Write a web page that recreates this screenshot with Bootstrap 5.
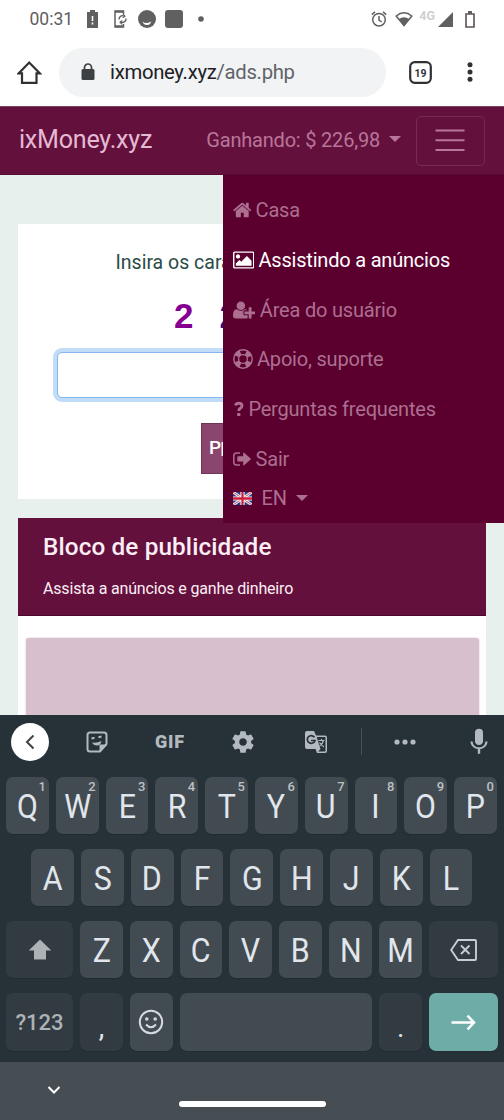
<!DOCTYPE html>
<html lang="pt">
<head>
<meta charset="utf-8">
<meta name="viewport" content="width=device-width, initial-scale=1">
<title>ixMoney.xyz</title>
<link href="https://cdn.jsdelivr.net/npm/bootstrap@5.3.0/dist/css/bootstrap.min.css" rel="stylesheet">
<style>
body{font-family:Roboto,"Liberation Sans",sans-serif;height:1120px;overflow:hidden;background:#fff;line-height:1.2}
svg{display:block;flex:none}
.statusbar{height:40px;padding:0 29px 2px 29.5px;color:#606060;font-size:17.5px}
.addressbar{height:66px;padding-left:17px;padding-bottom:2px}
.omnibox{width:327px;height:49px;background:#f1f3f4;margin-left:17px;padding-left:22px;font-size:20.3px;letter-spacing:-.3px;color:#5f6368}
.omnibox b{font-weight:400;color:#202124}
.topnav{height:69px;background:#64103d;padding:0 19px;border-top:1px solid #7c4460;border-bottom:1px solid #5a0836}
.topnav .navbar-brand{color:#e5b9d3;font-size:25.1px;padding:0;margin:0;letter-spacing:-.24px}
.earn{color:#b87699;font-size:20px;margin-left:auto;margin-right:15px;letter-spacing:-.2px;padding-bottom:2px}
.earn::after,.lang::after{margin-left:9px;vertical-align:5px;border-width:6px 6px 0}
.navbar-toggler{width:69px;height:50px;border:1px solid #772b54;border-radius:5px;padding:0 1px 2px 0}
.sitepage{height:540px;background:#e8f0ee;padding:49px 18px 0}
.captcha{height:275px;background:#fff;padding-top:27px}
.captcha p{font-size:19.5px;color:#2b4b46;margin-left:97.5px;width:107px;overflow:hidden;line-height:24px}
.digits{font:700 35px/40px "Liberation Sans",sans-serif;color:#850091;padding-left:156px;margin-top:21px;height:40px;width:205px;white-space:nowrap;overflow:hidden}
.digits span{display:inline-block;margin-left:26px;color:#2b0d8a}
.answer{width:390px;height:46px;margin:16px 0 0 38.5px;border:1px solid #86b7ee;border-radius:5px;box-shadow:0 0 0 4px #c0dcf6;padding:0}
.send{margin:25px 0 0 183px;width:101px;height:51px;background:#8a466f;border:1px solid #713459;border-radius:0;color:#fff;font-size:19px;font-weight:500;padding:0 7px;text-align:left}
.adhead{height:98px;background:#64103d;margin-top:19px;padding:15px 25px;color:#fceef5;border-bottom:1px solid #4c0630}
.adhead h2{font-size:24.3px;font-weight:500;line-height:28px;margin:0 0 17px;letter-spacing:.12px}
.adhead p{font-size:16px;line-height:22px;margin:0;letter-spacing:-.17px}
.adbody{height:110px;padding:22px 7px 0 8px;background:#fff}
.adslot{height:90px;background:#d7bfce;border-radius:3px;box-shadow:0 0 2px #cfb5c5}
.sidemenu{position:absolute;left:223px;top:175px;width:281px;height:348px;background:#5b002e;padding:11px 0 0 9.500px;font-size:20px;letter-spacing:-.2px;color:#ac6f90;z-index:2}
.sidemenu .nav-link{height:49.7px;padding:0 0 1px;color:inherit;display:flex;align-items:center;gap:4.500px;white-space:nowrap}
.sidemenu .nav-link svg{height:20px;fill:currentColor}
.sidemenu .active{color:#fff}
.lang{height:28px;display:flex;align-items:center}
.keyboard{height:347px;background:#273138;color:#e1e6ec;position:relative;z-index:3}
.toolrow{height:53px;color:#b3babf}
.toolrow>div{display:flex;justify-content:center;align-items:center}
.w73{width:73px}
.back{width:38px;height:38px;background:#fff}
.gif{font-size:18px;font-weight:900;letter-spacing:.8px}
.keys{display:flex;gap:7px;height:57px;margin:0 6.5px 15px 6px}
.keys>div{width:42.8px;background:#434b52;border-radius:7px;display:flex;align-items:center;justify-content:center;font-size:33px;position:relative;box-shadow:0 1px 0 #222b31;flex:none;padding-top:3px}
.keys span{transform:scaleX(.92);line-height:32px}
.keys sup{position:absolute;right:3px;top:2px;font-size:13px;font-weight:500;line-height:15px;color:#bac0c5}
.keys>.dim{background:#313b41;color:#acb2b6}
.keys>.wide{width:67px}
.keys>.enter{background:#6eaca7}
.keys>.pic{padding-top:0}
.sysbar{height:58px;background:#464e53;position:relative;z-index:3}
.homebar{width:147px;height:6px;border-radius:3px;background:#fff}
</style>
</head>
<body>
<div class="statusbar d-flex align-items-center">
  <span>00:31</span>
  <svg style="margin-left:12px" width="16" height="20" viewBox="0 0 16 20"><path fill="#606060" d="M5 1h5v2h3v16H2V3h3z"/><path d="M7.5 7v5M7.5 13.5v2" stroke="#fff" stroke-width="1.6"/></svg>
  <svg style="margin-left:12px" width="16" height="20" viewBox="0 0 16 20" fill="none" stroke="#606060"><path d="M10.500 5V2H2v16h8.500v-3" stroke-width="1.500"/><path d="M2 2.700h8.500M2 17.300h8.500" stroke-width="2"/><path d="M6 10.500a3.600 3.600 0 0 1 5.500-3.300M13 9.500a3.600 3.600 0 0 1-5.500 3.400" stroke-width="1.400"/><path d="m10 5 2 2.200-2.300 1.600M9 15.300l-2-2.300 2.300-1.500" stroke-width="1.100"/></svg>
  <svg style="margin-left:9px" width="18" height="18" viewBox="0 0 18 18"><circle cx="9" cy="9" r="9" fill="#606060"/><path d="M4.500 11.500q3 3 8.500 0q-.5 3.500-4 3.500t-4.500-3.500" fill="#fff"/></svg>
  <svg style="margin-left:9px" width="18" height="18" viewBox="0 0 18 18"><rect width="18" height="18" rx="3" fill="#606060"/></svg>
  <svg style="margin-left:15px" width="6" height="6" viewBox="0 0 6 6"><circle cx="3" cy="3" r="2.800" fill="#606060"/></svg>
  <svg class="ms-auto" width="16" height="16" viewBox="0 0 16 16" fill="none" stroke="#606060" stroke-width="1.500"><circle cx="8" cy="8.700" r="6.300"/><path d="M8 5v4l2.700 2M.8 3.600 4 .9M15.200 3.600 12 .9"/></svg>
  <svg style="margin-left:8px" width="18" height="16" viewBox="0 0 18 16"><path d="M1.200 5Q9-1.500 16.800 5L9 14.500z" fill="none" stroke="#606060" stroke-width="1.500"/><path d="M4 8q5-3.500 10 0l-5 7z" fill="#606060"/></svg>
  <span class="fw-bold" style="font-size:12.5px;color:#cfcfcf;margin:-8px 0 0 6px">4G</span>
  <svg style="margin-left:3px" width="15" height="15" viewBox="0 0 15 15"><path d="M15 0v15H0z" fill="#606060"/></svg>
  <svg style="margin-left:12px" width="10" height="17" viewBox="0 0 10 17"><path d="M1 3h8v13H1z" fill="none" stroke="#5d5150" stroke-width="1.600"/><path d="M3 0h4v3H3z" fill="#606060"/></svg>
</div>
<div class="addressbar d-flex align-items-center">
  <svg width="25" height="25" viewBox="0 0 25 25" fill="none" stroke="#303134" stroke-width="2.200"><path d="M1.800 13.300H5v9.500h14.500v-9.500h3.200L12.200 2.500z"/></svg>
  <div class="omnibox rounded-pill d-flex align-items-center">
    <svg width="14" height="18" viewBox="0 0 14 18"><rect x=".5" y="6" width="13" height="11" rx="1.500" fill="#3c4043"/><path d="M3.500 7V4.500a3.500 3.500 0 0 1 7 0V7" fill="none" stroke="#3c4043" stroke-width="1.700"/></svg>
    <span style="margin-left:15px"><b>ixmoney.xyz</b>/ads.php</span>
  </div>
  <svg style="margin-left:23px" width="23" height="23" viewBox="0 0 23 23"><rect x="1.200" y="1.200" width="20.600" height="20.600" rx="4.500" fill="none" stroke="#303134" stroke-width="2.200"/><text x="11.500" y="15.600" text-anchor="middle" font-family="Roboto" font-size="11.800" font-weight="700" textLength="12" lengthAdjust="spacingAndGlyphs" fill="#303134">19</text></svg>
  <svg style="margin-left:35px" width="6" height="20" viewBox="0 0 6 20" fill="#303134"><circle cx="3" cy="2.700" r="2.500"/><circle cx="3" cy="10" r="2.500"/><circle cx="3" cy="17.300" r="2.500"/></svg>
</div>
<nav class="topnav d-flex align-items-center">
  <a class="navbar-brand" href="#">ixMoney.xyz</a>
  <span class="earn dropdown-toggle">Ganhando: $ 226,98</span>
  <button class="navbar-toggler d-flex align-items-center justify-content-center" type="button" aria-label="Menu">
    <svg width="30" height="24" viewBox="0 0 30 24" stroke="#b87699" stroke-width="2"><path d="M0.500 2.500h29M0.500 12.200h29M0.500 22h29"/></svg>
  </button>
</nav>
<main class="sitepage overflow-hidden">
  <section class="captcha">
    <p class="mt-0 mb-0 text-nowrap">Insira os cara</p>
    <div class="digits">2<span>2</span></div>
    <input class="answer d-block" type="text" aria-label="Captcha">
    <button class="send d-block" type="button">P<svg class="d-inline-block" width="3" height="14" viewBox="0 0 3 14"><path d="M.5 0h2v14h-2z" fill="#fff"/></svg></button>
  </section>
  <section>
    <div class="adhead"><h2>Bloco de publicidade</h2><p>Assista a anúncios e ganhe dinheiro</p></div>
    <div class="adbody"><div class="adslot"></div></div>
  </section>
</main>
<div class="sidemenu">
  <a class="nav-link" href="#"><svg viewBox="0 0 1664 1792"><path d="M1408 992v480q0 26-19 45t-45 19h-384v-384h-256v384h-384q-26 0-45-19t-19-45v-480q0-1 .5-3t.5-3l575-474 575 474q1 2 1 6zm223-69l-62 74q-8 9-21 11h-3q-13 0-21-7l-692-577-692 577q-12 8-24 7-13-2-21-11l-62-74q-8-10-7-23.500t11-21.500l719-599q32-26 76-26t76 26l244 204v-195q0-14 9-23t23-9h192q14 0 23 9t9 23v408l219 182q10 8 11 21.500t-7 23.500z"/></svg>Casa</a>
  <a class="nav-link active" href="#"><svg viewBox="0 0 1920 1792"><path d="M640 576q0 80-56 136t-136 56-136-56-56-136 56-136 136-56 136 56 56 136zm1024 384v448h-1408v-192l320-320 160 160 512-512zm96-704h-1600q-13 0-22.500 9.500t-9.500 22.500v1216q0 13 9.500 22.500t22.500 9.500h1600q13 0 22.500-9.500t9.500-22.500v-1216q0-13-9.500-22.500t-22.500-9.500zm160 32v1216q0 66-47 113t-113 47h-1600q-66 0-113-47t-47-113v-1216q0-66 47-113t113-47h1600q66 0 113 47t47 113z"/></svg>Assistindo a anúncios</a>
  <a class="nav-link" href="#"><svg viewBox="0 0 2048 1792"><path d="M704 896q-159 0-271.500-112.500t-112.500-271.500 112.500-271.500 271.500-112.500 271.500 112.500 112.500 271.500-112.500 271.500-271.500 112.500zm960 128h352q13 0 22.500 9.500t9.500 22.500v192q0 13-9.500 22.500t-22.500 9.500h-352v352q0 13-9.500 22.500t-22.500 9.500h-192q-13 0-22.500-9.500t-9.500-22.500v-352h-352q-13 0-22.500-9.500t-9.500-22.500v-192q0-13 9.500-22.500t22.500-9.500h352v-352q0-13 9.500-22.500t22.500-9.500h192q13 0 22.500 9.500t9.500 22.500v352zm-736 224q0 52 38 90t90 38h256v238q-68 50-171 50h-874q-121 0-194-69t-73-190q0-53 3.500-103.500t14-109 26.500-108.500 43-97.500 62-81 85.500-53.500 111.500-20q19 0 39 17 79 61 154.500 91.500t164.500 30.500 164.500-30.500 154.500-91.500q20-17 39-17 132 0 217 96h-223q-52 0-90 38t-38 90v192z"/></svg>Área do usuário</a>
  <a class="nav-link" href="#"><svg viewBox="0 0 20 20"><g style="fill:none" stroke="currentColor"><circle cx="10" cy="10" r="9.200" stroke-width="1.400"/><circle cx="10" cy="10" r="4.400" stroke-width="1.300"/><circle cx="10" cy="10" r="6.900" stroke-width="5" stroke-dasharray="5.420 5.420" stroke-dashoffset="-2.710"/></g></svg>Apoio, suporte</a>
  <a class="nav-link" href="#"><svg viewBox="0 0 11.400 20"><path d="M2.300 6.400Q3.300 4.200 5.700 4.200q3.300 0 3.300 2.600 0 1.400-1.700 2.500-1.500.9-1.500 2.600" style="fill:none" stroke="currentColor" stroke-width="2.900"/><rect x="4.200" y="13.900" width="3.200" height="3.200" rx=".5"/></svg>Perguntas frequentes</a>
  <a class="nav-link" href="#"><svg viewBox="0 0 18.600 20"><path d="M7 4H3.500Q.8 4 .8 6.700v6.600Q.8 16 3.500 16H7" style="fill:none" stroke="currentColor" stroke-width="1.500"/><path d="M5 7.300h5.200V4.200q0-1.100.9-.4l6.500 5.700q.5.500 0 1l-6.500 5.700q-.9.700-.9-.4v-3.200H5q-.7 0-.7-.7V8q0-.7.700-.7"/></svg>Sair</a>
  <div class="lang dropdown-toggle"><svg style="margin-right:10px" width="19" height="13" viewBox="0 0 19 13"><rect width="19" height="13" fill="#23408e"/><path d="M0 0l19 13M19 0 0 13" stroke="#eee" stroke-width="2.800"/><path d="M0 0l19 13M19 0 0 13" stroke="#d4475c" stroke-width="1"/><path d="M9.500 0v13M0 6.500h19" stroke="#fff" stroke-width="4.200"/><path d="M9.500 0v13M0 6.500h19" stroke="#d01f3c" stroke-width="2.300"/></svg>EN</div>
</div>
<div class="keyboard">
  <div class="toolrow d-flex">
    <div style="width:60.500px"><div class="back rounded-circle d-flex align-items-center justify-content-center"><svg width="14" height="16" viewBox="0 0 14 16" fill="none" stroke="#444" stroke-width="2"><path d="M10.500 1.500 4 8l6.500 6.500"/></svg></div></div>
    <div class="w73"><svg width="22" height="22" viewBox="0 0 22 22" fill="none" stroke="currentColor" stroke-width="2"><path d="M20.500 13V4q0-2.500-2.500-2.500H4Q1.500 1.500 1.500 4v14q0 2.500 2.500 2.500h10z"/><path d="M14 20.500V14h6.500z" fill="currentColor" stroke-width="1"/><path d="M5.500 7.500l3-.8M12.500 6.300l3-.8"/><path d="M6 11.500q5 1 9.500-1.500-1 4.500-4.500 4.500-3.500 0-5-3" fill="currentColor" stroke="none"/></svg></div>
    <div class="w73 gif">GIF</div>
    <div class="w73"><svg width="26" height="26" viewBox="0 0 24 24" fill="currentColor"><path d="M19.430 12.980c.04-.32.07-.64.07-.98s-.03-.66-.07-.98l2.110-1.650c.19-.15.24-.42.12-.64l-2-3.460c-.12-.22-.39-.3-.61-.22l-2.490 1c-.52-.4-1.080-.73-1.690-.98l-.38-2.650C14.460 2.180 14.250 2 14 2h-4c-.25 0-.46.18-.49.42l-.38 2.650c-.61.25-1.170.59-1.690.98l-2.490-1c-.23-.09-.49 0-.61.22l-2 3.460c-.13.22-.07.49.12.64l2.110 1.650c-.04.32-.07.65-.07.98s.03.66.07.98l-2.110 1.650c-.19.15-.24.42-.12.64l2 3.460c.12.22.39.3.61.22l2.490-1c.52.4 1.080.73 1.690.98l.38 2.650c.03.24.24.42.49.42h4c.25 0 .46-.18.49-.42l.38-2.650c.61-.25 1.170-.59 1.690-.98l2.490 1c.23.09.49 0 .61-.22l2-3.460c.12-.22.07-.49-.12-.64l-2.110-1.650zM12 15.500c-1.930 0-3.500-1.570-3.500-3.500s1.570-3.500 3.500-3.500 3.500 1.570 3.500 3.500-1.570 3.500-3.500 3.500z"/></svg></div>
    <div class="w73"><svg width="22" height="22" viewBox="0 0 22 22"><path d="M2 0h7l2 4.500h9q2 0 2 2V20q0 2-2 2h-8l-1.500-4H2q-2 0-2-2V2q0-2 2-2" fill="#b3babf"/><path d="M11.700 6h8q.8 0 .8.800v13q0 .8-.8.800h-6.500l2.300-2.700z" fill="#273138"/><path d="M9.500 6.300A3.900 3.900 0 1 0 10 9.500H6" fill="none" stroke="#273138" stroke-width="1.700"/><path d="M13.500 9.500h6M16.500 8v1.500M18.500 9.500q-1 4-4 5.500M14.500 11.500q2 3 4.500 4.500" fill="none" stroke="#b3babf" stroke-width="1.200"/></svg></div>
    <div style="width:8px"></div><div class="align-self-center" style="width:1px;height:27px;background:#455158"></div>
    <div style="width:87.500px"><svg width="22" height="6" viewBox="0 0 22 6" fill="currentColor"><circle cx="3" cy="3" r="2.600"/><circle cx="11" cy="3" r="2.600"/><circle cx="19" cy="3" r="2.600"/></svg></div>
    <div style="width:55px;padding-left:4px"><svg width="28" height="28" viewBox="0 0 28 24" preserveAspectRatio="none" fill="currentColor"><g transform="translate(-.5 0)"><path d="M14.500 14.500c2.500 0 4-1.500 4-3.200V3.700c0-1.700-1.500-3-4-3s-4 1.300-4 3v7.600c0 1.700 1.500 3.200 4 3.200z"/><path d="M20.800 11.500c0 3-3 5.100-6.300 5.100s-6.300-2.100-6.300-5.100h-2.200c0 3.400 3.300 6 7.300 6.600V22h2.400v-3.900c4-.5 7.300-3.200 7.300-6.600z"/></g></svg></div>
  </div>
  <div class="keys" style="margin-top:9px"><div><span>Q</span><sup>1</sup></div><div><span>W</span><sup>2</sup></div><div><span>E</span><sup>3</sup></div><div><span>R</span><sup>4</sup></div><div><span>T</span><sup>5</sup></div><div><span>Y</span><sup>6</sup></div><div><span>U</span><sup>7</sup></div><div><span>I</span><sup>8</sup></div><div><span>O</span><sup>9</sup></div><div><span>P</span><sup>0</sup></div></div>
  <div class="keys justify-content-center"><div><span>A</span></div><div><span>S</span></div><div><span>D</span></div><div><span>F</span></div><div><span>G</span></div><div><span>H</span></div><div><span>J</span></div><div><span>K</span></div><div><span>L</span></div></div>
  <div class="keys"><div class="dim wide pic"><svg width="24" height="22" viewBox="0 0 24 22"><path d="M12 .5 23.300 11.500H18V20.500H6V11.500H.7z" fill="#acb2b6"/></svg></div><div><span>Z</span></div><div><span>X</span></div><div><span>C</span></div><div><span>V</span></div><div><span>B</span></div><div><span>N</span></div><div><span>M</span></div><div class="dim wide pic flex-fill"><svg width="27" height="22" viewBox="0 0 27 22" fill="none" stroke="#c8cdd1" stroke-width="1.900"><path d="M8 1h17q1 0 1 1v18q0 1-1 1H8L1.200 11zM11 6.500l8.500 8.500M19.500 6.500 11 15"/></svg></div></div>
  <div class="keys mb-0" style="height:58px"><div class="dim wide" style="font-size:22px;font-weight:500;letter-spacing:0">?123</div><div class="dim" style="font-size:28px;color:#e1e6ec;padding-top:11px">,</div><div class="pic"><svg width="26" height="26" viewBox="0 0 26 26" fill="none" stroke="#d5dae0" stroke-width="2"><circle cx="13" cy="13" r="11.200"/><path d="M8 15.500q5 5.500 10 0"/><circle cx="8.800" cy="10" r=".8"/><circle cx="17.200" cy="10" r=".8"/></svg></div><div class="flex-fill"></div><div class="dim" style="font-size:28px;color:#e1e6ec;padding-top:11px">.</div><div class="enter pic" style="width:68.5px"><svg width="25" height="17" viewBox="0 0 25 17" fill="none" stroke="#fff" stroke-width="2.500"><path d="M.5 8.500h22M16.500 1.700 23 8.500l-6.500 6.800"/></svg></div></div>
</div>
<div class="sysbar d-flex justify-content-center align-items-center">
  <svg class="position-absolute" style="left:47px;top:23px" width="14" height="10" viewBox="0 0 14 10"><path d="M1.500 2 7 7.500 12.500 2" fill="none" stroke="#fff" stroke-width="2"/></svg>
  <div class="homebar" style="margin-top:26px"></div>
</div>
</body>
</html>
